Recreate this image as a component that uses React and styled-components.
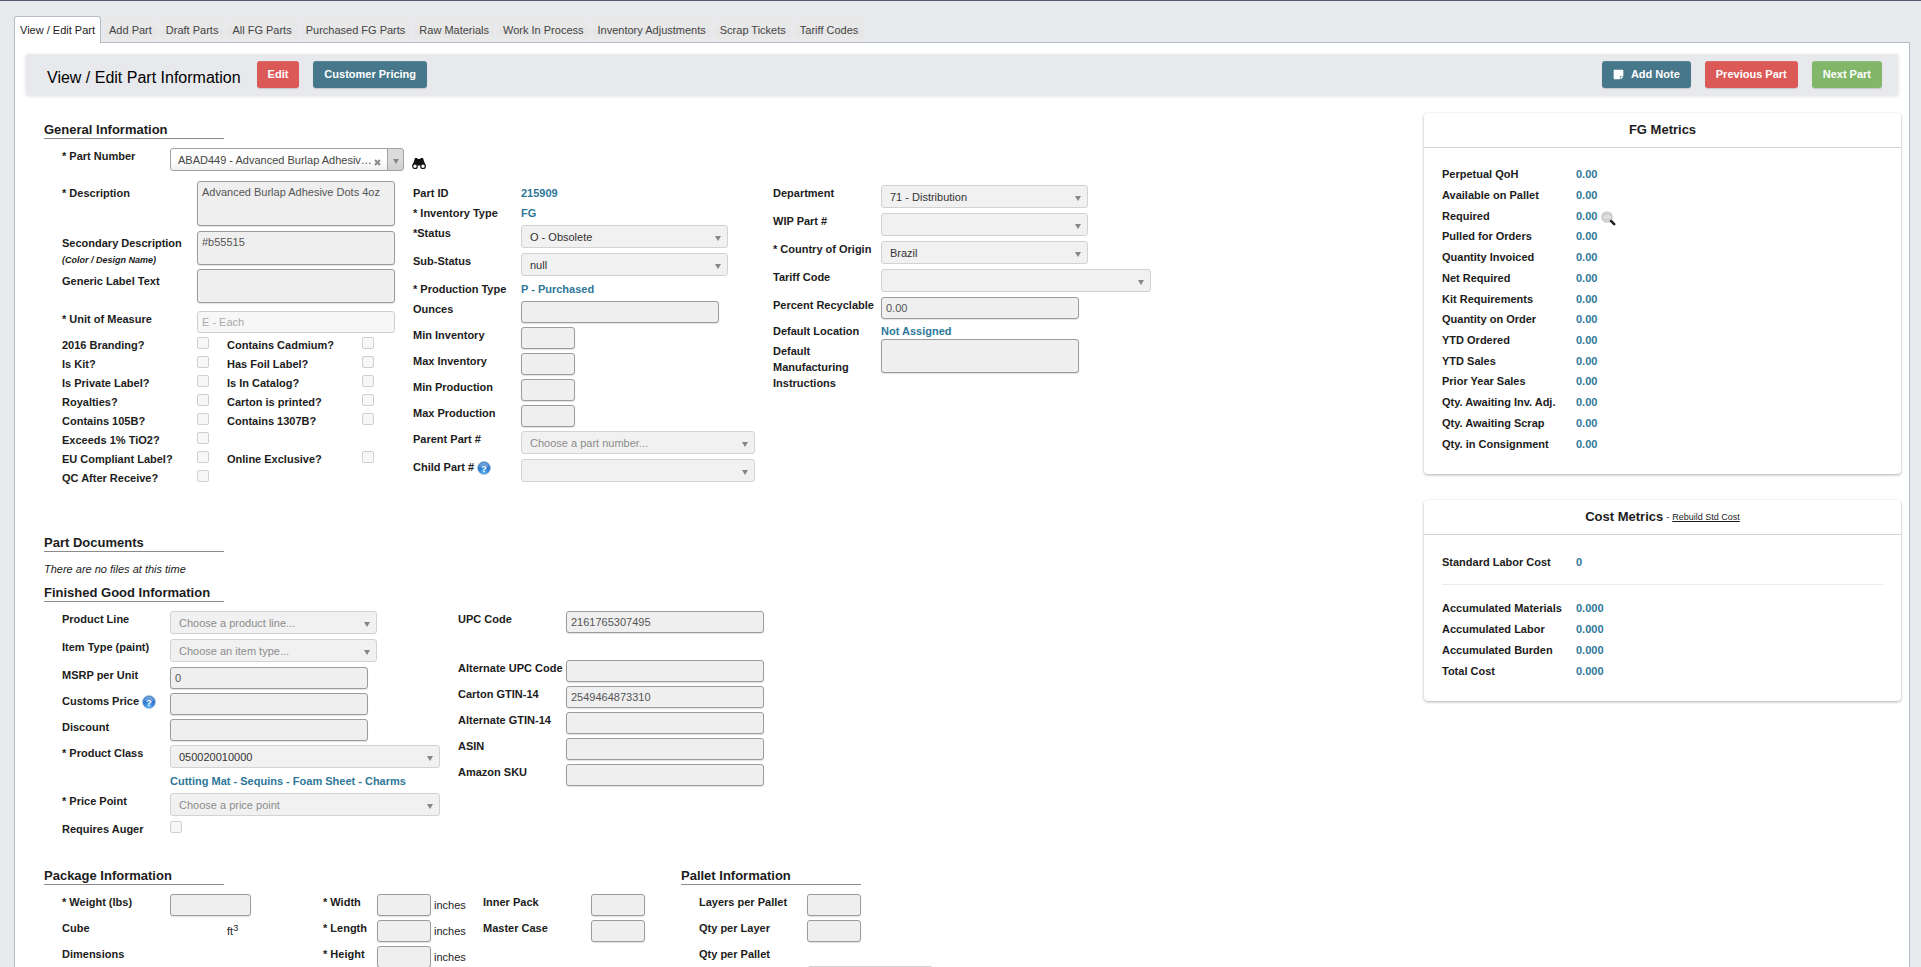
import React, { useId } from 'react';
import styled, { createGlobalStyle, css } from 'styled-components';

import { FaStickyNote } from 'react-icons/fa';

const GlobalStyle = createGlobalStyle`
    * {
        box-sizing: border-box;
    }

    body {
        margin: 0;
        background-color: #e8e9ed;
        color: #1c1c1c;
        font-family: "Liberation Sans", Arial, sans-serif;
        font-size: 11px;
        line-height: 16px;
    }

    button, input, select, textarea {
        font-family: inherit;
        font-size: 11px;
        margin: 0;
    }
`;

const Page = styled.div`
    display: flex;
    flex-direction: column;
    height: 100vh;
    overflow: hidden;
    border-top: 1px solid #535a75;
    padding: 15px 11px 0 14px;
`;

const Tabs = styled.nav`
    display: flex;
    flex: none;
    gap: 2px;
    height: 27px;
    margin-bottom: -1px;
    z-index: 1;
`;

const Tab = styled.a`
    border: 1px solid transparent;
    border-bottom: none;
    padding: 5px 5px 0 5px;
    color: #444;
    text-decoration: none;
    white-space: nowrap;
    background: linear-gradient(#e9e9ea, #e8e8e9 50%, #e4e4e4 50%, #eaeaeb) padding-box;
    background-size: 100% 25px;
    background-repeat: no-repeat;

    ${props => props.$active && css`
        background: #fff;
        border-color: #b5bdc8;
        border-radius: 3px 3px 0 0;
        color: #222;
    `}
`;

const Panel = styled.div`
    flex: 1 0 auto;
    background-color: #fff;
    border: 1px solid #b5bdc8;
    border-bottom: none;
`;

const Toolbar = styled.header`
    display: flex;
    align-items: flex-start;
    gap: 14px;
    height: 41px;
    margin: 11px 11px 18px 11px;
    padding: 7px 16px 0 21px;
    background-color: #e8e9ed;
    box-shadow: 0 1px 4px rgba(0,0,0,0.14);
`;

const Title = styled.h1`
    margin: 0;
    padding: 7px 2px 0 0;
    font-size: 16px;
    font-weight: normal;
    line-height: 20px;
    color: #000;
`;

const Spacer = styled.div`
    flex: 1;
`;

const Button = styled.button`
    display: flex;
    align-items: center;
    gap: 7px;
    height: 27px;
    padding: 0 11px 1px 11px;
    border: none;
    border-radius: 3px;
    box-shadow: 0 1px 1px rgba(0,0,0,0.15), inset 0 1px rgba(255,255,255,0.1);
    background-color: ${props => props.$color};
    color: #fff;
    font-weight: bold;
`;

const Body = styled.div`
    display: flex;
    align-items: flex-start;
    padding: 0 8px 0 29px;
`;

const Main = styled.main`
    flex: 1;
    padding-top: 7px;
`;

const Aside = styled.aside`
    flex: 0 0 477px;
`;

const Section = styled.section`
    margin-bottom: ${props => props.$space || 0}px;
`;

const Heading = styled.h2`
    width: 180px;
    margin: 0 0 9px 0;
    padding-top: 2px;
    border-bottom: 1px solid #8b8b8b;
    font-size: 13px;
    line-height: 16px;
    white-space: nowrap;
`;

const NoFiles = styled.p`
    margin: 0 0 6px 0;
    font-style: italic;
`;

const Columns = styled.div`
    display: flex;
    align-items: flex-start;
    padding-left: ${props => props.$indent ? 18 : 0}px;
`;

const Column = styled.div`
    flex: 0 0 ${props => props.$width}px;
    padding-top: ${props => props.$lower ? 4 : 0}px;
`;

const rowHeights = {
    short: 16,
    text: 20,
    input: 26,
    select: 28,
    part: 33,
    area: 38,
    tall: 42,
    large: 50,
    gap: 49,
};

const Row = styled.div`
    display: flex;
    align-items: flex-start;
    height: ${props => rowHeights[props.$size]}px;
`;

const Label = styled.label`
    flex: 0 0 ${props => props.$width || 108}px;
    padding-top: ${props => props.$area ? 4 : 0}px;
    font-weight: bold;
    white-space: ${props => props.$wrap ? 'normal' : 'nowrap'};

    small {
        display: block;
        font-size: 9px;
        font-style: italic;
        line-height: 18px;
    }

    svg {
        vertical-align: middle;
    }
`;

const Value = styled.output`
    font-weight: bold;
    color: #2f7799;
    white-space: nowrap;
`;

const Note = styled.span`
    padding: 3px 0 0 ${props => props.$left}px;

    sup {
        font-size: 9px;
        line-height: 1;
        vertical-align: 4px;
    }
`;

const box = css`
    width: ${props => props.$width || 198}px;
    border: 1px solid #9c9c9c;
    border-radius: 3px;
    box-shadow: 0 1px 1px rgba(0,0,0,0.12);
    background-color: #efefef;
    color: #555;
    padding: 0 4px;
`;

const TextInput = styled.input`
    ${box}
    height: 22px;

    ${props => props.$faded && css`
        border-color: #cfcfcf;
        box-shadow: none;
        background-color: #f7f7f7;
        color: #aaa;
    `}
`;

const TextArea = styled.textarea`
    ${box}
    display: block;
    height: ${props => props.$height}px;
    padding-top: 3px;
    line-height: 14px;
    resize: none;
`;

const SelectBox = styled.div`
    position: relative;
    width: ${props => props.$width || 207}px;

    &::after {
        content: '';
        position: absolute;
        right: 7px;
        top: 11px;
        border: 3px solid transparent;
        border-top: 5px solid #858585;
        border-bottom: none;
        pointer-events: none;
    }
`;

const Select = styled.select`
    display: block;
    width: 100%;
    height: 23px;
    padding: 1px 20px 0 8px;
    appearance: none;
    border: 1px solid #d2d2d2;
    border-radius: 3px;
    background-color: #f1f1f1;
    color: ${props => props.$empty ? '#8c8c8c' : '#333'};
    opacity: 1;
`;

const PartBox = styled(SelectBox)`
    margin-right: 8px;

    &::after {
        right: 5px;
    }
`;

const PartSelect = styled(Select)`
    padding-left: 7px;
    border-color: #a3a3a3;
    color: #444;
    background: linear-gradient(90deg, transparent calc(100% - 16px), #a3a3a3 calc(100% - 16px), #a3a3a3 calc(100% - 15px), rgba(0,0,0,0.14) calc(100% - 15px)),
        linear-gradient(#fff 50%, #f0f0f0);
`;

const ClearButton = styled.button`
    position: absolute;
    top: 9px;
    right: 21px;
    display: flex;
    padding: 2px;
    border: none;
    background: none;
    color: #8a8a8a;
`;

const IconButton = styled.button`
    display: flex;
    margin-top: 9px;
    padding: 0;
    border: none;
    background: none;
`;

const Checks = styled.div`
    display: grid;
    grid-template-columns: 135px 30px 135px 12px;
    grid-auto-rows: 19px;
    align-items: start;
`;

const Checkbox = styled.input`
    width: 12px;
    height: 12px;
    appearance: none;
    border: 1px solid #d0d0d0;
    border-radius: 2px;
    background-color: #f7f7f7;
`;

const Card = styled.section`
    margin-bottom: 26px;
    padding-bottom: 20px;
    border-radius: 4px;
    box-shadow: 0 1px 3px rgba(0,0,0,0.32);
`;

const CardHeader = styled.header`
    display: flex;
    justify-content: center;
    align-items: center;
    gap: 3px;
    height: 35px;
    margin-bottom: 16px;
    border-bottom: 1px solid #cfd1d3;
    font-size: 9px;

    h2 {
        margin: 0;
        font-size: 13px;
    }

    a {
        color: inherit;
    }
`;

const Metrics = styled.table`
    width: calc(100% - 36px);
    height: ${props => props.$height}px;
    margin: 0 18px;
    border-collapse: collapse;
    font-weight: bold;

    th, td {
        padding: 0;
        text-align: left;
    }

    th {
        width: 134px;
    }

    td {
        color: #2f7799;
    }

    svg {
        margin: 0 0 -6px 4px;
    }
`;

const Divider = styled.hr`
    margin: 12px 18px;
    border: none;
    border-top: 1px solid #ececec;
`;

const HelpIcon = () => (
    <svg width="14" height="14" viewBox="0 0 16 16" role="img" aria-label="Help">
        <defs>
            <radialGradient id="help" cx="50%" cy="85%" r="80%">
                <stop offset="0" stopColor="#5eb4f2" />
                <stop offset="0.6" stopColor="#2a76cf" />
                <stop offset="1" stopColor="#4b86cb" />
            </radialGradient>
        </defs>
        <circle cx="8" cy="8" r="7.4" fill="url(#help)" stroke="#a3bfe0" strokeWidth="0.8" />
        <path d="M2.5 7a5.5 5 0 0 1 11 0q-5.5-2-11 0z" fill="#fff" opacity="0.25" />
        <text x="8" y="12" textAnchor="middle" fontSize="11" fontWeight="bold" fill="#fff">?</text>
    </svg>
);

const BinocularsIcon = () => (
    <svg width="14" height="13" viewBox="0 0 14 13">
        <path d="M3 1h2.5v1H8.5V1H11l.6 2 2 5.5H8.800L8 7H6l-.8 1.5H.4L2.4 3z" fill="#111" />
        <rect x="5.5" y="5" width="3" height="3.5" fill="#111" />
        <circle cx="3" cy="9.2" r="2.3" fill="#fff" stroke="#111" strokeWidth="1.2" />
        <circle cx="11" cy="9.2" r="2.3" fill="#fff" stroke="#111" strokeWidth="1.2" />
    </svg>
);

const MagnifierIcon = () => (
    <svg width="15" height="15" viewBox="0 0 15 15">
        <circle cx="6" cy="6" r="5" fill="#dfe2e2" stroke="#bcbcbc" strokeWidth="1.2" />
        <path d="M3 5.5a3 3 0 0 1 5.5-1M3.5 7.5a3 3 0 0 0 5-.5" fill="none" stroke="#b3bab8" strokeWidth="0.8" />
        <path d="M9 9l1.5 1.5" stroke="#888" strokeWidth="1.5" />
        <path d="M10.2 10.2l3 3" stroke="#222" strokeWidth="2.6" strokeLinecap="round" />
    </svg>
);

const ClearIcon = () => (
    <svg width="7" height="7" viewBox="0 0 7 7">
        <path d="M1 1l5 5M6 1l-5 5" stroke="currentColor" strokeWidth="2" />
    </svg>
);

const ValueField = ({ label, value, size = 'text' }) => {
    const id = useId();
    return (
        <Row $size={size}>
            <Label htmlFor={id}>{label}</Label>
            <Value id={id}>{value}</Value>
        </Row>
    );
};

const InputField = ({ label, value = '', width, labelWidth, help, size = 'input', faded, after }) => {
    const id = useId();
    return (
        <Row $size={size}>
            <Label htmlFor={id} $width={labelWidth}>{label} {help && <HelpIcon />}</Label>
            <TextInput id={id} type="text" defaultValue={value} disabled $width={width} $faded={faded} />
            {after && <Note $left={3}>{after}</Note>}
        </Row>
    );
};

const AreaField = ({ label, note, value = '', height, labelWidth, size = 'area', wrap }) => {
    const id = useId();
    return (
        <Row $size={size}>
            <Label htmlFor={id} $width={labelWidth} $wrap={wrap} $area>
                {label}
                {note && <small>{note}</small>}
            </Label>
            <TextArea id={id} defaultValue={value} disabled $height={height} />
        </Row>
    );
};

const SelectField = ({ label, value = '', placeholder, width, help }) => {
    const id = useId();
    return (
        <Row $size="select">
            <Label htmlFor={id}>{label} {help && <HelpIcon />}</Label>
            <SelectBox $width={width}>
                <Select id={id} disabled $empty={!!placeholder}>
                    <option>{placeholder || value}</option>
                </Select>
            </SelectBox>
        </Row>
    );
};

const CheckField = ({ label }) => {
    const id = useId();
    if (!label) {
        return <><span /><span /></>;
    }
    return (
        <>
            <Label htmlFor={id}>{label}</Label>
            <Checkbox id={id} type="checkbox" disabled />
        </>
    );
};

const MetricsTable = ({ rows, height }) => (
    <Metrics $height={height}>
        <tbody>
            {rows.map(([label, value, lookup]) => (
                <tr key={label}>
                    <th scope="row">{label}</th>
                    <td>{value}{lookup && <MagnifierIcon />}</td>
                </tr>
            ))}
        </tbody>
    </Metrics>
);

const tabs = [
    'View / Edit Part', 'Add Part', 'Draft Parts', 'All FG Parts', 'Purchased FG Parts',
    'Raw Materials', 'Work In Process', 'Inventory Adjustments', 'Scrap Tickets', 'Tariff Codes',
];

const checks = [
    '2016 Branding?', 'Contains Cadmium?',
    'Is Kit?', 'Has Foil Label?',
    'Is Private Label?', 'Is In Catalog?',
    'Royalties?', 'Carton is printed?',
    'Contains 105B?', 'Contains 1307B?',
    'Exceeds 1% TiO2?', '',
    'EU Compliant Label?', 'Online Exclusive?',
    'QC After Receive?', '',
];

const fgMetrics = [
    ['Perpetual QoH', '0.00'],
    ['Available on Pallet', '0.00'],
    ['Required', '0.00', true],
    ['Pulled for Orders', '0.00'],
    ['Quantity Invoiced', '0.00'],
    ['Net Required', '0.00'],
    ['Kit Requirements', '0.00'],
    ['Quantity on Order', '0.00'],
    ['YTD Ordered', '0.00'],
    ['YTD Sales', '0.00'],
    ['Prior Year Sales', '0.00'],
    ['Qty. Awaiting Inv. Adj.', '0.00'],
    ['Qty. Awaiting Scrap', '0.00'],
    ['Qty. in Consignment', '0.00'],
];

const costMetrics = [
    ['Accumulated Materials', '0.000'],
    ['Accumulated Labor', '0.000'],
    ['Accumulated Burden', '0.000'],
    ['Total Cost', '0.000'],
];

const GeneralInformation = () => (
    <Section $space={44}>
        <Heading>General Information</Heading>
        <Columns $indent>
            <Row $size="part">
                <Label htmlFor="part-number">* Part Number</Label>
                <PartBox $width={234}>
                    <PartSelect id="part-number">
                        <option>ABAD449 - Advanced Burlap Adhesiv…</option>
                    </PartSelect>
                    <ClearButton type="button" aria-label="Clear"><ClearIcon /></ClearButton>
                </PartBox>
                <IconButton type="button" aria-label="Find part"><BinocularsIcon /></IconButton>
            </Row>
        </Columns>
        <Columns $indent>
            <Column $width={351}>
                <AreaField label="* Description" value="Advanced Burlap Adhesive Dots 4oz" height={45} labelWidth={135} size="large" />
                <AreaField label="Secondary Description" note="(Color / Design Name)" value="#b55515" height={34} labelWidth={135} />
                <AreaField label="Generic Label Text" height={34} labelWidth={135} size="tall" />
                <InputField label="* Unit of Measure" value="E - Each" labelWidth={135} faded />
                <Checks>
                    {checks.map((label, i) => <CheckField key={i} label={label} />)}
                </Checks>
            </Column>
            <Column $width={360} $lower>
                <ValueField label="Part ID" value="215909" />
                <ValueField label="* Inventory Type" value="FG" />
                <SelectField label="*Status" value="O - Obsolete" />
                <SelectField label="Sub-Status" value="null" />
                <ValueField label="* Production Type" value="P - Purchased" />
                <InputField label="Ounces" />
                <InputField label="Min Inventory" width={54} />
                <InputField label="Max Inventory" width={54} />
                <InputField label="Min Production" width={54} />
                <InputField label="Max Production" width={54} />
                <SelectField label="Parent Part #" placeholder="Choose a part number..." width={234} />
                <SelectField label="Child Part #" width={234} help />
            </Column>
            <Column $width={378} $lower>
                <SelectField label="Department" value="71 - Distribution" />
                <SelectField label="WIP Part #" />
                <SelectField label="* Country of Origin" value="Brazil" />
                <SelectField label="Tariff Code" width={270} />
                <InputField label="Percent Recyclable" value="0.00" />
                <ValueField label="Default Location" value="Not Assigned" size="short" />
                <AreaField label="Default Manufacturing Instructions" height={34} wrap />
            </Column>
        </Columns>
    </Section>
);

const FinishedGoodInformation = () => (
    <Section $space={25}>
        <Heading>Finished Good Information</Heading>
        <Columns $indent>
            <Column $width={396}>
                <SelectField label="Product Line" placeholder="Choose a product line..." />
                <SelectField label="Item Type (paint)" placeholder="Choose an item type..." />
                <InputField label="MSRP per Unit" value="0" />
                <InputField label="Customs Price" help />
                <InputField label="Discount" />
                <SelectField label="* Product Class" value="050020010000" width={270} />
                <ValueField label="" value="Cutting Mat - Sequins - Foam Sheet - Charms" />
                <SelectField label="* Price Point" placeholder="Choose a price point" width={270} />
                <Row $size="text">
                    <Label htmlFor="requires-auger">Requires Auger</Label>
                    <Checkbox id="requires-auger" type="checkbox" disabled />
                </Row>
            </Column>
            <Column $width={306}>
                <InputField label="UPC Code" value="2161765307495" size="gap" />
                <InputField label="Alternate UPC Code" />
                <InputField label="Carton GTIN-14" value="2549464873310" />
                <InputField label="Alternate GTIN-14" />
                <InputField label="ASIN" />
                <InputField label="Amazon SKU" />
            </Column>
        </Columns>
    </Section>
);

const PackageInformation = () => (
    <Columns>
        <Section>
            <Heading>Package Information</Heading>
            <Columns $indent>
                <Column $width={261}>
                    <InputField label="* Weight (lbs)" width={81} />
                    <Row $size="input">
                        <Label as="span">Cube</Label>
                        <Note $left={57}>ft<sup>3</sup></Note>
                    </Row>
                    <Row $size="input"><Label as="span">Dimensions</Label></Row>
                </Column>
                <Column $width={160}>
                    <InputField label="* Width" width={54} labelWidth={54} after="inches" />
                    <InputField label="* Length" width={54} labelWidth={54} after="inches" />
                    <InputField label="* Height" width={54} labelWidth={54} after="inches" />
                </Column>
                <Column $width={198}>
                    <InputField label="Inner Pack" width={54} />
                    <InputField label="Master Case" width={54} />
                </Column>
            </Columns>
        </Section>
        <Section>
            <Heading>Pallet Information</Heading>
            <Columns $indent>
                <Column $width={234}>
                    <InputField label="Layers per Pallet" width={54} />
                    <InputField label="Qty per Layer" width={54} />
                    <ValueField label="Qty per Pallet" value="" />
                    <SelectField label="" width={126} />
                </Column>
            </Columns>
        </Section>
    </Columns>
);

const App = () => {
    return (
        <Page>
            <GlobalStyle />
            <Tabs>
                {tabs.map((tab, i) => (
                    <Tab key={tab} href="#" $active={i === 0}>{tab}</Tab>
                ))}
            </Tabs>
            <Panel>
                <Toolbar>
                    <Title>View / Edit Part Information</Title>
                    <Button type="button" $color="#db5957">Edit</Button>
                    <Button type="button" $color="#47778b">Customer Pricing</Button>
                    <Spacer />
                    <Button type="button" $color="#47778b"><FaStickyNote size={11} />Add Note</Button>
                    <Button type="button" $color="#db5957">Previous Part</Button>
                    <Button type="button" $color="#82b76a">Next Part</Button>
                </Toolbar>
                <Body>
                    <Main>
                        <GeneralInformation />
                        <Heading>Part Documents</Heading>
                        <NoFiles>There are no files at this time</NoFiles>
                        <FinishedGoodInformation />
                        <PackageInformation />
                    </Main>
                    <Aside>
                        <Card>
                            <CardHeader><h2>FG Metrics</h2></CardHeader>
                            <MetricsTable rows={fgMetrics} height={290} />
                        </Card>
                        <Card>
                            <CardHeader>
                                <h2>Cost Metrics</h2>
                                <span>-</span>
                                <a href="#">Rebuild Std Cost</a>
                            </CardHeader>
                            <MetricsTable rows={[['Standard Labor Cost', '0']]} height={21} />
                            <Divider />
                            <MetricsTable rows={costMetrics} height={84} />
                        </Card>
                    </Aside>
                </Body>
            </Panel>
        </Page>
    );
};

export default App;
